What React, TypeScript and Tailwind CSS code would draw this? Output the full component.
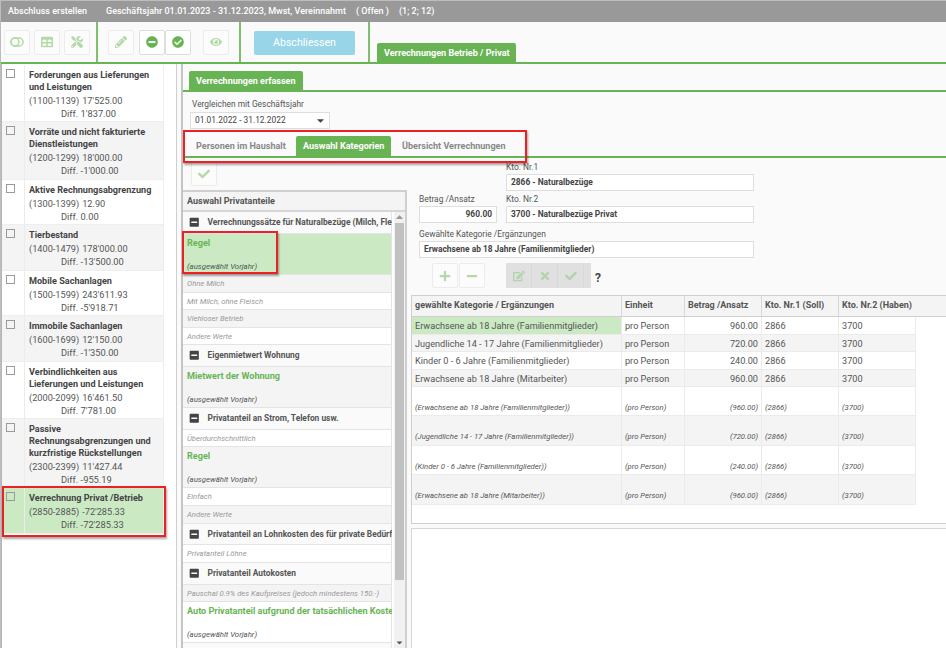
import type { ReactNode } from "react";
import clsx from "clsx";
import {
	FaCaretDown,
	FaCheck,
	FaCheckCircle,
	FaEdit,
	FaEye,
	FaMinus,
	FaMinusCircle,
	FaMinusSquare,
	FaPencilAlt,
	FaPlus,
	FaTable,
	FaTimes,
	FaTools,
} from "react-icons/fa";

const accounts = [
	{ title: ["Forderungen aus Lieferungen", "und Leistungen"], range: "(1100-1139)", sum: "17'525.00", diff: "1'837.00", height: "h-[57px]" },
	{ title: ["Vorräte und nicht fakturierte", "Dienstleistungen"], range: "(1200-1299)", sum: "18'000.00", diff: "-1'000.00", height: "h-[58px]" },
	{ title: ["Aktive Rechnungsabgrenzung"], range: "(1300-1399)", sum: "12.90", diff: "0.00", height: "h-[45px]" },
	{ title: ["Tierbestand"], range: "(1400-1479)", sum: "178'000.00", diff: "-13'500.00", height: "h-[46px]" },
	{ title: ["Mobile Sachanlagen"], range: "(1500-1599)", sum: "243'611.93", diff: "-5'918.71", height: "h-[45px]" },
	{ title: ["Immobile Sachanlagen"], range: "(1600-1699)", sum: "12'150.00", diff: "-1'350.00", height: "h-[46px]" },
	{ title: ["Verbindlichkeiten aus", "Lieferungen und Leistungen"], range: "(2000-2099)", sum: "16'461.50", diff: "7'781.00", height: "h-[57px]" },
	{ title: ["Passive", "Rechnungsabgrenzungen und", "kurzfristige Rückstellungen"], range: "(2300-2399)", sum: "11'427.44", diff: "-955.19", height: "h-[69px]" },
	{ title: ["Verrechnung Privat /Betrieb"], range: "(2850-2885)", sum: "-72'285.33", diff: "-72'285.33", height: "h-[46px]", active: true },
];

type Share = {
	kind: "group" | "chosen" | "item";
	name: string;
	height: string;
	bg: string;
};

const shares: Share[] = [
	{ kind: "group", name: "Verrechnungssätze für Naturalbezüge (Milch, Fle", height: "h-[22px]", bg: "bg-[#fafafa]" },
	{ kind: "chosen", name: "Regel", height: "h-[41px]", bg: "bg-[#cbeac4]" },
	{ kind: "item", name: "Ohne Milch", height: "h-[18px]", bg: "bg-[#f4f4f4]" },
	{ kind: "item", name: "Mit Milch, ohne Fleisch", height: "h-[17px]", bg: "bg-white" },
	{ kind: "item", name: "Viehloser Betrieb", height: "h-[18px]", bg: "bg-[#f4f4f4]" },
	{ kind: "item", name: "Andere Werte", height: "h-[17px]", bg: "bg-white" },
	{ kind: "group", name: "Eigenmietwert Wohnung", height: "h-[22px]", bg: "bg-[#fafafa]" },
	{ kind: "chosen", name: "Mietwert der Wohnung", height: "h-[41px]", bg: "bg-[#f4f4f4]" },
	{ kind: "group", name: "Privatanteil an Strom, Telefon usw.", height: "h-[22px]", bg: "bg-[#fafafa]" },
	{ kind: "item", name: "Überdurchschnittlich", height: "h-[17px]", bg: "bg-white" },
	{ kind: "chosen", name: "Regel", height: "h-[41px]", bg: "bg-[#f4f4f4]" },
	{ kind: "item", name: "Einfach", height: "h-[18px]", bg: "bg-white" },
	{ kind: "item", name: "Andere Werte", height: "h-[18px]", bg: "bg-[#f4f4f4]" },
	{ kind: "group", name: "Privatanteil an Lohnkosten des für private Bedürf", height: "h-[21px]", bg: "bg-[#fafafa]" },
	{ kind: "item", name: "Privatanteil Löhne", height: "h-[18px]", bg: "bg-white" },
	{ kind: "group", name: "Privatanteil Autokosten", height: "h-[22px]", bg: "bg-[#fafafa]" },
	{ kind: "item", name: "Pauschal 0.9% des Kaufpreises (jedoch mindestens 150.-)", height: "h-[17px]", bg: "bg-[#f4f4f4]" },
	{ kind: "chosen", name: "Auto Privatanteil aufgrund der tatsächlichen Koste", height: "h-[41px]", bg: "bg-white" },
	{ kind: "group", name: "", height: "h-[22px]", bg: "bg-[#fafafa]" },
];

const rows = [
	["Erwachsene ab 18 Jahre (Familienmitglieder)", "960.00"],
	["Jugendliche 14 - 17 Jahre (Familienmitglieder)", "720.00"],
	["Kinder 0 - 6 Jahre (Familienmitglieder)", "240.00"],
	["Erwachsene ab 18 Jahre (Mitarbeiter)", "960.00"],
];

const columns = "grid grid-cols-[210px_63px_77px_77px_77px]";

function ToolButton({ children, enabled = false }: { children: ReactNode; enabled?: boolean }) {
	return (
		<button
			className={clsx(
				"flex h-[25px] w-[26px] shrink-0 items-center justify-center rounded-xs border text-[12px]",
				enabled ? "border-[#dedede] bg-white text-[#68b455]" : "border-[#ececec] bg-[#fcfcfc] text-[#b2d9a8]",
			)}
		>
			{children}
		</button>
	);
}

function ToggleIcon() {
	return (
		<svg width="14" height="10" viewBox="0 0 14 10" fill="none" stroke="currentColor" strokeWidth="1.5">
			<rect x="0.9" y="1" width="12.2" height="8" rx="4" />
			<circle cx="5" cy="5" r="3.9" />
		</svg>
	);
}

function AccountList() {
	return (
		<aside className="w-[176px] shrink-0 border-r border-l border-r-[#cfcfcf] border-l-[#b5b5b5] bg-white pt-px">
			<div className="w-[162px]">
				{accounts.map((a, i) => (
					<div
						key={a.range}
						className={clsx(
							"relative flex border-r border-b border-[#eeeeee]",
							a.height,
							a.active ? "bg-[#cbeac4]" : i % 2 ? "bg-[#f4f4f4]" : "bg-white",
						)}
					>
						<div className="w-[23px] shrink-0 border-r border-[#ececec] pt-1 pl-1">
							<div className="size-[9px] border border-[#9a9a9a]" />
						</div>
						<div className="pt-1 pl-1 whitespace-nowrap">
							{a.title.map((line) => (
								<div key={line} className="text-[9.1px] leading-3 font-bold text-[#444]">{line}</div>
							))}
							<div className="flex gap-[3px] pt-px text-[9.2px] leading-[13px]">
								<span>{a.range}</span>
								<span>{a.sum}</span>
							</div>
							<div className="pl-8 text-[9.3px] leading-[13px]">Diff. {a.diff}</div>
						</div>
						{a.active && (
							<div className="absolute -top-[2px] left-0 h-[51px] w-[164px] border-2 border-[#ee2024] shadow-[1px_2px_2px_rgba(0,0,0,0.35)]" />
						)}
					</div>
				))}
			</div>
		</aside>
	);
}

function ShareList() {
	return (
		<div className="flex h-[458px] w-[224px] shrink-0 flex-col border-t-2 border-r-2 border-[#cfcfcf] bg-white">
			<div className="h-[20px] shrink-0 border-b-2 border-[#d6d6d6] bg-[#f4f4f4] pl-1 text-[9px] leading-[18px] font-bold">
				Auswahl Privatanteile
			</div>
			<div className="flex min-h-0 flex-1 justify-between">
				<div className="w-[209px] overflow-hidden">
					{shares.map((s, i) => (
						<div
							key={i}
							className={clsx(
								"border-r border-b border-[#e4e4e4] whitespace-nowrap",
								s.height,
								s.bg,
							)}
						>
							{s.kind === "group" && s.name && (
								<div className="flex h-full items-center pl-[6px] text-[8.4px] font-bold">
									<FaMinusSquare className="mr-2 shrink-0 text-[10.5px] text-[#444]" />
									{s.name}
								</div>
							)}
							{s.kind === "chosen" && (
								<div className="pl-1">
									<div className="pt-[3px] text-[9.1px] leading-[12px] font-bold text-[#68b455]">{s.name}</div>
									<div className="pt-3 text-[7.8px] leading-[11px] italic">(ausgewählt Vorjahr)</div>
								</div>
							)}
							{s.kind === "item" && (
								<div className="pl-1 text-[7.7px] leading-[17px] text-[#999] italic">{s.name}</div>
							)}
						</div>
					))}
				</div>
				<div className="flex w-[11px] flex-col items-center bg-[#f1f1f1]">
					<FaCaretDown className="h-[11px] rotate-180 text-[9px] text-[#999]" />
					<div className="h-[357px] w-[9px] bg-[#c1c1c1]" />
					<FaCaretDown className="mt-auto mb-px text-[9px] text-[#555]" />
				</div>
			</div>
		</div>
	);
}

function Field({ label, value, className }: { label: string; value: string; className?: string }) {
	return (
		<div className={className}>
			<div className="h-[13px] text-[8.4px] leading-3">{label}</div>
			<div className="h-[17px] border border-[#dedede] bg-white px-1 text-[8.4px] leading-[15px] font-bold text-[#444]">
				{value}
			</div>
		</div>
	);
}

function CategoryTable() {
	return (
		<div className="h-[229px] border border-r-0 border-[#cfcfcf] bg-white">
			<div className="h-[21px] border-b border-[#cfcfcf] bg-[#f4f4f4] text-[9px] leading-[19px] font-bold">
				<div className={clsx(columns, "h-full")}>
					{["gewählte Kategorie / Ergänzungen", "Einheit", "Betrag /Ansatz", "Kto. Nr.1 (Soll)"].map((h) => (
						<div key={h} className="border-r border-[#d8d8d8] pl-[3px] whitespace-nowrap">{h}</div>
					))}
					<div className="pl-[3px] whitespace-nowrap">Kto. Nr.2 (Haben)</div>
				</div>
			</div>
			<div className="w-[504px]">
				{[false, true].map((previous) =>
					rows.map(([name, amount], i) => {
						const cells = [name, "pro Person", amount, "2866", "3700"];
						return (
							<div
								key={name}
								className={clsx(
									columns,
									"whitespace-nowrap",
									i % 2 ? "bg-[#f4f4f4]" : "bg-white",
									previous ? "text-[7.7px] leading-[17px] italic" : "text-[9.15px] leading-[18px]",
								)}
							>
								{cells.map((cell, c) => (
									<div
										key={c}
										className={clsx(
											"border-r border-b border-[#ebebeb] px-[3px]",
											previous ? "h-[29.4px] pt-3" : "h-[17.5px]",
											c === 2 && "text-right",
											!previous && i === 0 && c === 0 && "bg-[#cbeac4]",
										)}
									>
										{previous ? `(${cell})` : cell}
									</div>
								))}
							</div>
						);
					}),
				)}
			</div>
		</div>
	);
}

function Details() {
	return (
		<section className="min-w-0 flex-1 pl-1">
			<div className="pl-2">
				<Field className="ml-[87px] w-[248px] pt-[3px]" label="Kto. Nr.1" value="2866 - Naturalbezüge" />
				<div className="flex gap-[9px] pt-[2px]">
					<Field className="w-[78px] [&>div:last-child]:text-right" label="Betrag /Ansatz" value="960.00" />
					<Field className="w-[248px]" label="Kto. Nr.2" value="3700 - Naturalbezüge Privat" />
				</div>
				<Field
					className="w-[335px] pt-[5px]"
					label="Gewählte Kategorie /Ergänzungen"
					value="Erwachsene ab 18 Jahre (Familienmitglieder)"
				/>
				<div className="flex items-center pt-[5px] pb-[7px] pl-[13px]">
					<ToolButton><FaPlus /></ToolButton>
					<div className="w-px" />
					<ToolButton><FaMinus /></ToolButton>
					<div className="ml-[21px] flex h-[25px] w-[85px] bg-[#e0e0e0] text-[12px] text-[#b3d3ac]">
						{[FaEdit, FaTimes, FaCheck].map((Icon, i) => (
							<div key={i} className="flex w-[26px] items-center justify-center border-r border-[#d8d8d8]">
								<Icon />
							</div>
						))}
					</div>
					<span className="ml-1 pt-1 text-[12px] font-bold text-[#444]">?</span>
				</div>
			</div>
			<CategoryTable />
			<div className="mt-[4px] h-[130px] border-t border-l border-[#d6d6d6] bg-white" />
		</section>
	);
}

export default function App() {
	return (
		<main className="flex h-[648px] w-[946px] flex-col overflow-hidden border-t border-l border-[#bdbdbd] bg-[#fafafa] font-[Roboto,sans-serif] text-[#555]">
			<header className="flex h-[21px] shrink-0 items-center gap-[10px] bg-[#999] pl-[7px] text-[9px] font-medium text-white">
				<span className="mr-[9px]">Abschluss erstellen</span>
				<span>Geschäftsjahr 01.01.2023 - 31.12.2023, Mwst, Vereinnahmt</span>
				<span>( Offen )</span>
				<span>(1; 2; 12)</span>
			</header>

			<div className="flex h-[42px] shrink-0 border-b-2 border-[#68b455]">
				<div className="flex w-[97px] items-center gap-1 border-r-2 border-[#7fc06f] pl-[3px]">
					<ToolButton><ToggleIcon /></ToolButton>
					<ToolButton><FaTable /></ToolButton>
					<ToolButton><FaTools /></ToolButton>
				</div>
				<div className="flex w-[143px] items-center border-r-2 border-[#7fc06f] pl-[10px]">
					<ToolButton><FaPencilAlt /></ToolButton>
					<div className="w-[5px]" />
					<ToolButton enabled><FaMinusCircle /></ToolButton>
					<ToolButton enabled><FaCheckCircle /></ToolButton>
					<div className="w-3" />
					<ToolButton><FaEye /></ToolButton>
				</div>
				<div className="flex w-[129px] items-center border-r-2 border-[#7fc06f] pt-0.5 pl-[13px]">
					<button className="h-6 w-[101px] rounded-xs bg-[#98d5e8] text-[10.6px] text-white">Abschliessen</button>
				</div>
				<div className="mt-auto ml-[7px] h-[19px] w-[139px] rounded-t-xs bg-[#68b455] pl-[7px] text-[9.05px] leading-[21px] font-bold text-white">
					Verrechnungen Betrieb / Privat
				</div>
			</div>

			<div className="flex min-h-0 flex-1">
				<AccountList />
				<div className="ml-[4px] flex min-w-0 flex-1 flex-col border-l-2 border-[#c4c4c4]">
					<div className="flex h-[28px] shrink-0 items-end border-b-2 border-[#68b455] pl-[6px]">
						<div className="h-[19px] w-[114px] rounded-t-xs bg-[#68b455] pl-[7px] text-[9px] leading-[20px] font-bold text-white">
							Verrechnungen erfassen
						</div>
					</div>
					<div className="h-[37px] shrink-0 pt-[6px] pl-[7px]">
						<div className="pl-[2px] text-[8.4px] leading-3">Vergleichen mit Geschäftsjahr</div>
						<div className="mt-[2px] flex h-[17px] w-[140px] items-center justify-between border border-[#dedede] bg-white pr-[3px] pl-1 text-[8.4px] text-[#444]">
							01.01.2022 - 31.12.2022
							<FaCaretDown className="text-[11px]" />
						</div>
					</div>
					<nav className="relative flex h-[29px] shrink-0 items-end border-b-2 border-[#68b455] text-[9.05px] leading-[20px] font-bold text-[#888]">
						<div className="w-[113px] pl-[13px]">Personen im Haushalt</div>
						<div className="w-[95px] rounded-t-xs bg-[#68b455] pl-[7px] text-white">Auswahl Kategorien</div>
						<div className="pl-[11px]">Übersicht Verrechnungen</div>
						<div className="absolute top-[1px] left-0 z-10 h-[33px] w-[344px] border-2 border-[#ee2024] shadow-[1px_2px_2px_rgba(0,0,0,0.35)]" />
					</nav>
					<div className="flex min-h-0 flex-1">
						<div className="relative">
							<div className="h-[32px] pt-[3px] pl-2">
								<ToolButton><FaCheck /></ToolButton>
							</div>
							<ShareList />
							<div className="absolute top-[73px] -left-px h-[43px] w-[96px] border-2 border-[#ee2024] shadow-[1px_2px_2px_rgba(0,0,0,0.35)]" />
						</div>
						<Details />
					</div>
				</div>
			</div>
		</main>
	);
}
